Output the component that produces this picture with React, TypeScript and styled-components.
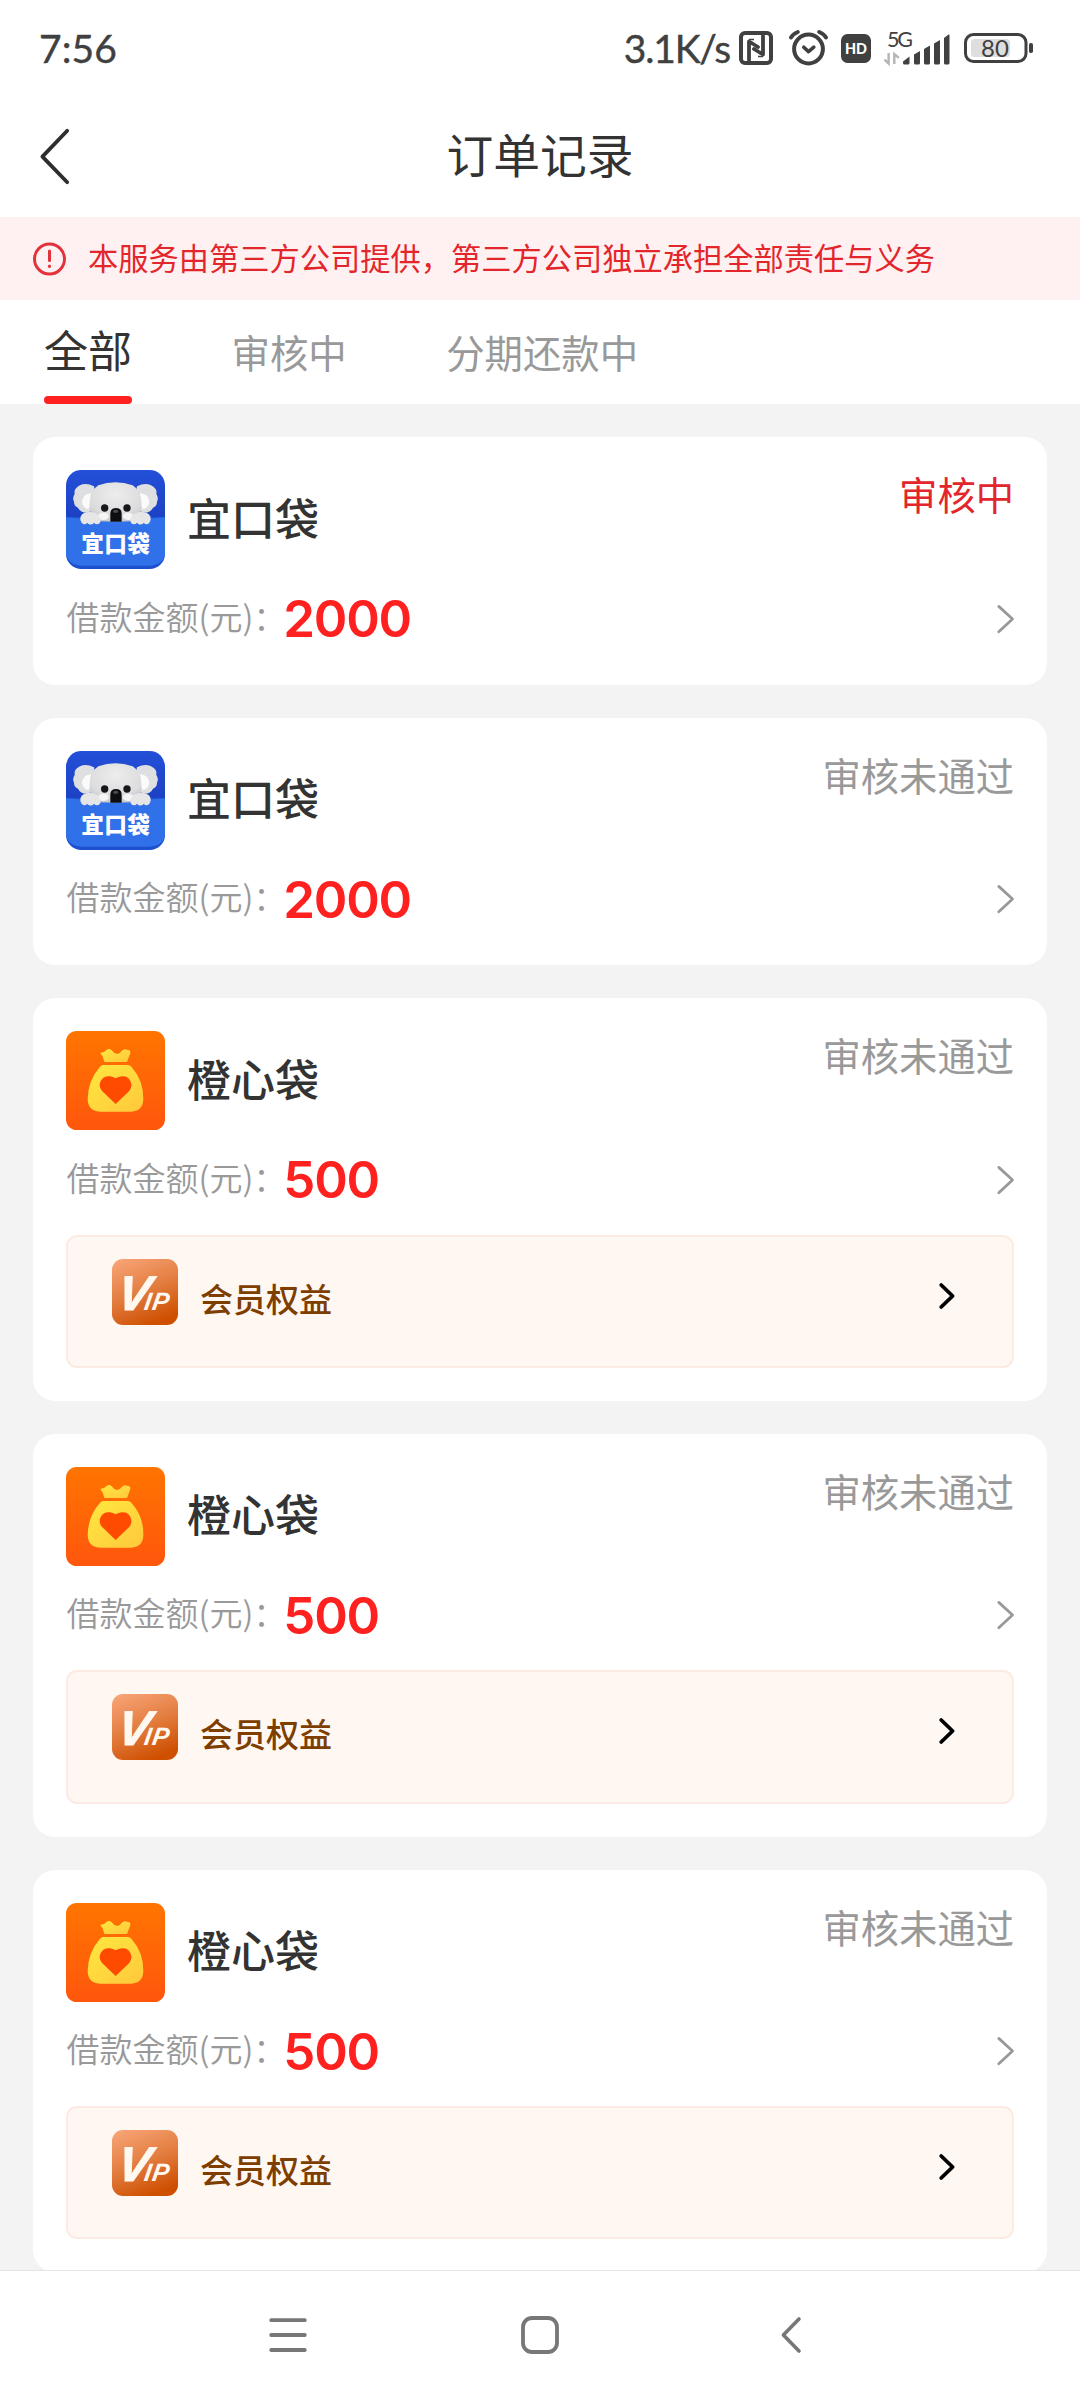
import React from "react";
import styled, { createGlobalStyle } from "styled-components";

const GlobalStyle = createGlobalStyle`
  * { box-sizing: border-box; }
  body { margin: 0; background: #fff; }
  svg { display: block; flex: none; overflow: visible; }
`;

const cjk = `"Noto Sans CJK SC", sans-serif`;

const Screen = styled.div`
  width: 1080px;
  height: 2400px;
  display: flex;
  flex-direction: column;
  overflow: hidden;
  background: #fff;
  font-family: ${cjk};
  color: #333;
`;

const StatusBar = styled.div`
  height: 96px;
  flex: none;
  display: flex;
  align-items: center;
  justify-content: space-between;
  padding: 0 47px 0 39px;
  font-family: Lato, sans-serif;
  font-size: 39px;
  font-weight: 400;
  color: #404040;
`;

const Clock = styled.span`
  letter-spacing: 0.1px;
  -webkit-text-stroke: 0.4px #404040;
`;

const StatusIcons = styled.div`
  display: flex;
  align-items: center;
`;

const Speed = styled.span`
  margin-right: 9px;
  letter-spacing: -1.2px;
  -webkit-text-stroke: 0.4px #404040;
`;

const Slot = styled.span<{ $gap: number }>`
  margin-right: ${(p) => p.$gap}px;
`;

const Header = styled.header`
  height: 121px;
  flex: none;
  display: grid;
  grid-template-columns: 200px 1fr 200px;
  align-items: center;
  padding: 0 41.5px;
`;

const Title = styled.h1`
  margin: 0;
  padding-bottom: 7px;
  text-align: center;
  font-size: 46.75px;
  line-height: 60px;
  font-weight: 400;
`;

const Notice = styled.div`
  height: 83px;
  flex: none;
  display: flex;
  align-items: center;
  gap: 22px;
  padding: 0 33px;
  background: #fff1f1;
  color: #e2262b;
`;

const NoticeText = styled.span`
  padding-bottom: 4px;
  font-size: 30.25px;
  line-height: 40px;
`;

const Tabs = styled.nav`
  height: 104px;
  flex: none;
  display: flex;
  align-items: stretch;
  gap: 99.5px;
  padding-left: 44px;
`;

const Tab = styled.div<{ $active?: boolean }>`
  display: flex;
  flex-direction: column;
  justify-content: space-between;
  font-size: ${(p) => (p.$active ? 44 : 38.4)}px;
  line-height: ${(p) => (p.$active ? 99 : 102)}px;
  height: 104px;
  color: ${(p) => (p.$active ? "#333" : "#999")};
  white-space: nowrap;
`;

const Underline = styled.i`
  height: 8px;
  flex: none;
  margin-top: -3px;
  border-radius: 4px;
  background: #ff2020;
`;

const List = styled.main`
  flex: 1;
  min-height: 0;
  overflow: hidden;
  display: flex;
  flex-direction: column;
  gap: 33px;
  padding: 33px 33px 0;
  background: #f3f3f3;
`;

const CardBox = styled.article`
  flex: none;
  padding: 33px;
  border-radius: 22px;
  background: #fff;
`;

const CardTop = styled.div`
  height: 99px;
  display: flex;
  align-items: center;
  gap: 22px;
`;

const Name = styled.h2`
  margin: 0;
  flex: 1;
  padding-bottom: 6px;
  font-size: 44px;
  line-height: 56px;
  font-weight: 500;
`;

const Status = styled.span<{ $pending: boolean }>`
  align-self: flex-start;
  font-size: 38.3px;
  line-height: 47px;
  color: ${(p) => (p.$pending ? "#e2262b" : "#999")};
`;

const AmountRow = styled.div`
  height: 66px;
  margin-top: 16.5px;
  display: flex;
  align-items: center;
`;

const AmountLabel = styled.span`
  padding: 0 0 6px 0.5px;
  font-size: 33px;
  line-height: 44px;
  font-weight: 350;
  color: #999;
`;

const Amount = styled.strong`
  flex: 1;
  margin: 1.5px 0 0 -3px;
  font-family: Inter, sans-serif;
  font-size: 51px;
  line-height: 60px;
  font-weight: 600;
  letter-spacing: -1.3px;
  color: #ff2020;
`;

const Benefit = styled.div`
  height: 133.3px;
  margin-top: 22px;
  display: flex;
  align-items: flex-start;
  padding: 22px 57px 0 44px;
  border: 2px solid #fcebe2;
  border-radius: 11px;
  background: #fff7f2;
`;

const BenefitName = styled.span`
  flex: 1;
  margin: 17px 0 0 22px;
  font-size: 33px;
  line-height: 44px;
  font-weight: 500;
  color: #7d3e00;
`;

const BenefitArrow = styled.span`
  margin-top: 24px;
`;

const NavBar = styled.footer`
  height: 130px;
  flex: none;
  display: grid;
  grid-template-columns: repeat(3, 251.5px);
  justify-content: center;
  align-items: center;
  justify-items: center;
  padding: 0 1px 1px 0;
  border-top: 1px solid #e4e4e4;
  background: #fff;
`;

const NfcIcon = () => (
  <svg width="34" height="34" viewBox="0 0 34 34" fill="none" stroke="#404040">
    <rect x="2" y="2" width="30" height="30" rx="4" strokeWidth="4" />
    <path d="M10 29V10.5L19 16M24 5V23.5L15 18" strokeWidth="3.8" strokeLinecap="round" strokeLinejoin="round" />
    <path d="M10 8.5H15M24 25.5H19" strokeWidth="1.6" />
  </svg>
);

const AlarmIcon = () => (
  <svg width="39" height="36" viewBox="0 0 39 36" fill="none" stroke="#404040" strokeLinecap="round" strokeLinejoin="round">
    <circle cx="19.5" cy="19" r="14.4" strokeWidth="4" />
    <path d="M14.8 17.2L19.5 21.6L24.8 17.2" strokeWidth="3.6" />
    <path d="M2 7.5Q4 4 8.8 2M37 7.5Q35 4 30.2 2" strokeWidth="4" />
  </svg>
);

const HdIcon = () => (
  <svg width="30" height="29" viewBox="0 0 30 29">
    <rect width="30" height="29" rx="6.5" fill="#404040" />
    <text x="15" y="20" textAnchor="middle" textLength="22" lengthAdjust="spacingAndGlyphs" fontFamily="Lato, sans-serif" fontWeight="900" fontSize="15.5" fill="#fff">HD</text>
  </svg>
);

const SignalIcon = () => (
  <svg width="66" height="34" viewBox="0 0 66 34" fill="#404040">
    <text x="3" y="16" fontFamily="Lato, sans-serif" fontSize="21.5" textLength="26" fill="#404040">5G</text>
    <path d="M4.6 22V32.5L0.4 28.6M10.3 33V23L14.8 26.8" fill="none" stroke="#b5b5b5" strokeWidth="2.4" />
    <path d="M19 32V30.5L25.5 25.5V32Q25.5 33.5 24 33.5H20.5Q19 33.5 19 32Z" />
    <path d="M30 32V23.5L36 20V32Q36 33.5 34.5 33.5H31.5Q30 33.5 30 32Z" />
    <path d="M40 32V18L46 14.5V32Q46 33.5 44.5 33.5H41.5Q40 33.5 40 32Z" />
    <path d="M50 32V12.5L56 9V32Q56 33.5 54.5 33.5H51.5Q50 33.5 50 32Z" />
    <path d="M60 32V7L64.5 3.5Q65.5 3.2 65.5 4.5V32Q65.5 33.5 64 33.5H61.5Q60 33.5 60 32Z" />
  </svg>
);

const BatteryIcon = () => (
  <svg width="69" height="30" viewBox="0 0 69 30">
    <rect x="1.5" y="1.5" width="60.5" height="27" rx="8" fill="none" stroke="#404040" strokeWidth="3" />
    <rect x="7" y="6" width="39" height="18" rx="3.5" fill="#dedede" />
    <rect x="65" y="10" width="4" height="10" rx="1.8" fill="#404040" />
    <text x="31" y="23.6" textAnchor="middle" textLength="28" fontFamily="Lato, sans-serif" fontSize="24" fill="#404040">80</text>
  </svg>
);

const BackIcon = () => (
  <svg width="31" height="56" viewBox="0 0 31 56" fill="none" stroke="#2e2e2e" strokeWidth="3.8" strokeLinecap="round" strokeLinejoin="round">
    <path d="M25.2 1.8L0.4 27.6L25.2 53.2" />
  </svg>
);

const AlertIcon = () => (
  <svg width="33" height="34" viewBox="0 0 33 34" fill="none" stroke="#e2333a" strokeLinecap="round">
    <circle cx="16.5" cy="17" r="15" strokeWidth="3" />
    <path d="M16.5 9V18.5M16.5 24V24.4" strokeWidth="3" />
  </svg>
);

const RowArrow = () => (
  <svg width="17" height="28" viewBox="0 0 17 28" fill="none" stroke="#999" strokeWidth="2.8" strokeLinecap="round" strokeLinejoin="round">
    <path d="M1.8 1.4L15.5 14L1.8 26.8" />
  </svg>
);

const BlackArrow = () => (
  <svg width="16" height="26" viewBox="0 0 16 26" fill="none" stroke="#000" strokeWidth="3.8" strokeLinecap="round" strokeLinejoin="round">
    <path d="M2.2 2L13.6 13L2.2 24" />
  </svg>
);

const KoalaLogo = () => (
  <svg width="99" height="99" viewBox="0 0 297 297">
    <defs>
      <clipPath id="koalaTile"><rect width="297" height="297" rx="46" /></clipPath>
      <linearGradient id="koalaSky" x1="0" y1="0" x2="0" y2="1">
        <stop offset="0" stopColor="#2350d8" /><stop offset="1" stopColor="#1b3fc2" />
      </linearGradient>
      <radialGradient id="koalaFur" cx="0.5" cy="0.3" r="0.75">
        <stop offset="0" stopColor="#ededed" /><stop offset="0.7" stopColor="#dcdcde" /><stop offset="1" stopColor="#bfc1c6" />
      </radialGradient>
    </defs>
    <g clipPath="url(#koalaTile)">
      <rect width="297" height="160" fill="url(#koalaSky)" />
      <rect y="140" width="297" height="157" fill="#1d50cf" />
      <path d="M0 142Q148 156 297 142V250Q295 284 250 287H47Q4 284 0 250Z" fill="#3070e8" />
      <path d="M84 49Q60 37 42 46Q22 56 26 72Q18 84 24 95Q24 108 36 113Q44 130 66 128L96 110Z" fill="#dedfe1" />
      <path d="M213 49Q237 37 255 46Q275 56 271 72Q279 84 273 95Q273 108 261 113Q253 130 231 128L201 110Z" fill="#dedfe1" />
      <path d="M74 70Q52 72 48 94Q48 112 66 118L80 96ZM223 70Q247 72 250 94Q249 112 232 118L217 96Z" fill="#fbfbfb" />
      <path d="M71 110Q67 65 97 46Q148 27 200 46Q230 65 226 110Q224 156 190 157H106Q73 156 71 110Z" fill="url(#koalaFur)" />
      <ellipse cx="112" cy="139" rx="16" ry="11" fill="#f5f5f5" />
      <ellipse cx="187" cy="139" rx="16" ry="11" fill="#f5f5f5" />
      <path d="M0 148Q148 162 297 148V185H0Z" fill="#3070e8" />
      <path d="M43 150Q41 128 68 126Q94 124 103 145Q106 162 94 163Q87 163 84 158Q78 166 70 163Q65 161 64 158Q58 165 52 162Q46 160 43 150Z" fill="#e6e6e7" />
      <path d="M254 150Q256 128 229 126Q203 124 194 145Q191 162 203 163Q210 163 213 158Q219 166 227 163Q232 161 233 158Q239 165 245 162Q251 160 254 150Z" fill="#e6e6e7" />
      <circle cx="116" cy="114" r="11" fill="#161719" />
      <circle cx="183" cy="114" r="11" fill="#161719" />
      <path d="M133 155V129Q134 114 150 114Q166 114 167 129V155Z" fill="#0d0e10" />
      <ellipse cx="149" cy="124" rx="8" ry="5" fill="#484a4f" />
      <text x="149" y="247" textAnchor="middle" textLength="206" fontFamily={cjk} fontWeight="900" fontSize="68" fill="#fff">宜口袋</text>
    </g>
  </svg>
);

const BagLogo = () => (
  <svg width="99" height="99" viewBox="0 0 297 297">
    <defs>
      <linearGradient id="bagTile" x1="0" y1="0" x2="0" y2="1">
        <stop offset="0" stopColor="#ff7500" /><stop offset="1" stopColor="#ff560d" />
      </linearGradient>
      <linearGradient id="bagGold" x1="0" y1="0" x2="1" y2="1">
        <stop offset="0" stopColor="#ffe83f" /><stop offset="1" stopColor="#ffc83c" />
      </linearGradient>
    </defs>
    <rect width="297" height="297" rx="32" fill="url(#bagTile)" />
    <path d="M103 66Q114 66 121 58Q129 50 137 58Q144 68 153 69Q161 69 167 60Q174 52 182 56Q195 56 193 66L184 91Q183 93 180 93H118Q115 93 114 90Q113 78 103 66Z" fill="url(#bagGold)" />
    <path d="M112 102H186Q192 102 196 107Q233 148 232 204Q231 242 192 242H105Q66 242 65 204Q66 148 102 107Q106 102 112 102Z" fill="url(#bagGold)" />
    <path d="M149 219L109 181Q96 166 104 150Q112 134 132 136Q141 137 149 142Q157 137 167 136Q186 134 193 150Q201 166 189 181Z" fill="#ff4b00" />
  </svg>
);

const VipLogo = () => (
  <svg width="66" height="66" viewBox="0 0 66 66">
    <defs>
      <linearGradient id="vipTile" x1="0.2" y1="0" x2="0.6" y2="1">
        <stop offset="0" stopColor="#f6a273" /><stop offset="0.5" stopColor="#e37d40" /><stop offset="1" stopColor="#ce4f00" />
      </linearGradient>
    </defs>
    <rect width="66" height="66" rx="11" fill="url(#vipTile)" />
    <text transform="translate(3.5 50.5) skewX(-9)" fontFamily='"Liberation Sans", sans-serif' fontWeight="700" fontStyle="italic" fontSize="49" fill="#fff8f0">
      <tspan stroke="#fff8f0" strokeWidth="0.8" letterSpacing="-5">V</tspan><tspan fontSize="25" letterSpacing="1">IP</tspan>
    </text>
  </svg>
);

const MenuIcon = () => (
  <svg width="38" height="36" viewBox="0 0 38 36" stroke="#777" strokeWidth="3.8" strokeLinecap="round">
    <path d="M2.2 3.2H35.8M2.2 18H35.8M2.2 33H35.8" />
  </svg>
);

const HomeIcon = () => (
  <svg width="38" height="38" viewBox="0 0 38 38">
    <rect x="2" y="2" width="34" height="34" rx="9" fill="none" stroke="#777" strokeWidth="3.8" />
  </svg>
);

const NavBackIcon = () => (
  <svg width="20" height="36" viewBox="0 0 20 36" fill="none" stroke="#777" strokeWidth="3.6" strokeLinecap="round" strokeLinejoin="round">
    <path d="M18 2L2.4 18L18 34" />
  </svg>
);

type Order = { brand: "koala" | "bag"; name: string; status: string; amount: number; vip?: boolean };

const orders: Order[] = [
  { brand: "koala", name: "宜口袋", status: "审核中", amount: 2000 },
  { brand: "koala", name: "宜口袋", status: "审核未通过", amount: 2000 },
  { brand: "bag", name: "橙心袋", status: "审核未通过", amount: 500, vip: true },
  { brand: "bag", name: "橙心袋", status: "审核未通过", amount: 500, vip: true },
  { brand: "bag", name: "橙心袋", status: "审核未通过", amount: 500, vip: true },
];

const OrderCard = ({ order }: { order: Order }) => (
  <CardBox>
    <CardTop>
      {order.brand === "koala" ? <KoalaLogo /> : <BagLogo />}
      <Name>{order.name}</Name>
      <Status $pending={order.status === "审核中"}>{order.status}</Status>
    </CardTop>
    <AmountRow>
      <AmountLabel>借款金额(元)：</AmountLabel>
      <Amount>{order.amount}</Amount>
      <RowArrow />
    </AmountRow>
    {order.vip && (
      <Benefit>
        <VipLogo />
        <BenefitName>会员权益</BenefitName>
        <BenefitArrow><BlackArrow /></BenefitArrow>
      </Benefit>
    )}
  </CardBox>
);

export default function App() {
  return (
    <Screen lang="zh-CN">
      <GlobalStyle />
      <StatusBar>
        <Clock>7:56</Clock>
        <StatusIcons>
          <Speed>3.1K/s</Speed>
          <Slot $gap={16}><NfcIcon /></Slot>
          <Slot $gap={13}><AlarmIcon /></Slot>
          <Slot $gap={13}><HdIcon /></Slot>
          <Slot $gap={14}><SignalIcon /></Slot>
          <BatteryIcon />
        </StatusIcons>
      </StatusBar>
      <Header>
        <BackIcon />
        <Title>订单记录</Title>
      </Header>
      <Notice>
        <AlertIcon />
        <NoticeText>本服务由第三方公司提供，第三方公司独立承担全部责任与义务</NoticeText>
      </Notice>
      <Tabs>
        <Tab $active>全部<Underline /></Tab>
        <Tab>审核中</Tab>
        <Tab>分期还款中</Tab>
      </Tabs>
      <List>
        {orders.map((order, i) => <OrderCard key={i} order={order} />)}
      </List>
      <NavBar>
        <MenuIcon />
        <HomeIcon />
        <NavBackIcon />
      </NavBar>
    </Screen>
  );
}
